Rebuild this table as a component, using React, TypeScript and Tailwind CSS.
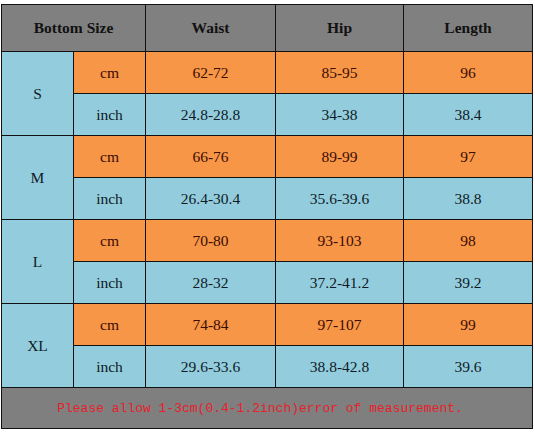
import { Fragment } from "react";

const rows = [
  { size: "S", cm: ["62-72", "85-95", "96"], inch: ["24.8-28.8", "34-38", "38.4"] },
  { size: "M", cm: ["66-76", "89-99", "97"], inch: ["26.4-30.4", "35.6-39.6", "38.8"] },
  { size: "L", cm: ["70-80", "93-103", "98"], inch: ["28-32", "37.2-41.2", "39.2"] },
  { size: "XL", cm: ["74-84", "97-107", "99"], inch: ["29.6-33.6", "38.8-42.8", "39.6"] },
];

const cell = "border border-[#111] text-center align-middle p-0";

export default function App() {
  return (
    <div className="w-[535px] h-[433px] bg-white pt-[4px] pl-[1px] font-['Liberation_Serif',serif] text-[15.5px]">
      <table className="border-collapse table-fixed w-[531px]">
        <colgroup>
          <col className="w-[72px]" />
          <col className="w-[72px]" />
          <col className="w-[130px]" />
          <col className="w-[128px]" />
          <col className="w-[129px]" />
        </colgroup>
        <thead>
          <tr className="h-[47px] bg-[#808080] text-[#111] font-bold">
            <th colSpan={2} className={cell}>Bottom Size</th>
            <th className={cell}>Waist</th>
            <th className={cell}>Hip</th>
            <th className={cell}>Length</th>
          </tr>
        </thead>
        <tbody>
          {rows.map((r) => (
            <Fragment key={r.size}>
              <tr className="h-[42px]">
                <td rowSpan={2} className={`${cell} bg-[#93cddd] text-[#0f1a26]`}>{r.size}</td>
                <td className={`${cell} bg-[#f79646] text-[#3a0c04]`}>cm</td>
                {r.cm.map((v, i) => (
                  <td key={i} className={`${cell} bg-[#f79646] text-[#3a0c04]`}>{v}</td>
                ))}
              </tr>
              <tr className="h-[42px]">
                <td className={`${cell} bg-[#93cddd] text-[#0f1a26]`}>inch</td>
                {r.inch.map((v, i) => (
                  <td key={i} className={`${cell} bg-[#93cddd] text-[#0f1a26]`}>{v}</td>
                ))}
              </tr>
            </Fragment>
          ))}
          <tr className="h-[41px]">
            <td colSpan={5} className={`${cell} bg-[#7f7f7f] text-[#e8202a] font-['Liberation_Mono',monospace] text-[13px] pt-[2px] pr-[14px]`}>
              Please allow 1-3cm(0.4-1.2inch)error of measurement.
            </td>
          </tr>
        </tbody>
      </table>
    </div>
  );
}
